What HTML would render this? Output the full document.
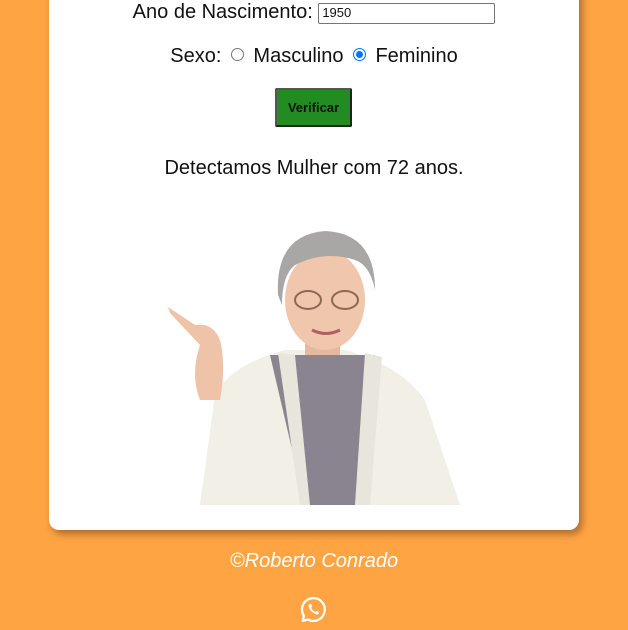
<!DOCTYPE html>
<html><head><meta charset="utf-8">
<style>
html,body{margin:0;padding:0;}
body{width:628px;height:630px;background:#FFA443;position:relative;overflow:hidden;font-family:"Liberation Sans",Arial,sans-serif;}
.card{position:absolute;left:49px;top:-20px;width:530px;height:550px;background:#fff;border-radius:10px;box-shadow:3px 4px 8px rgba(0,0,0,0.35);}
.t{position:absolute;left:0;width:628px;text-align:center;color:#111;font-size:20px;}
.inp{display:inline-block;border:1px solid #767676;border-radius:2px;vertical-align:middle;font-size:13px;text-align:left;line-height:18px;padding-left:3px;box-sizing:border-box;width:177px;height:21px;position:relative;top:1px}
.radio{display:inline-block;width:13px;height:13px;border:1px solid #767676;border-radius:50%;vertical-align:middle;margin:0 9px 0 10px;position:relative;top:-2px;box-sizing:border-box}
.radio.on{border-color:#0075ff;}
.radio.on:after{content:"";position:absolute;left:2px;top:2px;width:7px;height:7px;border-radius:50%;background:#0075ff;}
.btn{position:absolute;left:275px;top:88px;width:77px;height:39px;background:#228B22;border:2px solid #333;box-sizing:border-box;border-radius:2px;font-weight:bold;font-size:13px;text-align:center;line-height:35px;color:#111;border-color:#555 #222 #222 #555}
</style></head><body>
<div class="card"></div>
<div class="t" style="top:1px;">Ano de Nascimento: <span class="inp">1950</span></div>
<div class="t" style="top:45px;">Sexo:<span class="radio"></span>Masculino<span class="radio on"></span>Feminino</div>
<div class="btn">Verificar</div>
<div class="t" style="top:157px;">Detectamos Mulher com 72 anos.</div>
<svg style="position:absolute;left:160px;top:225px" width="310" height="282" viewBox="0 0 310 282">
  <path d="M40 280 L55 170 Q70 140 125 125 L185 125 Q240 140 265 175 L300 280 Z" fill="#f1efe6"/>
  <path d="M110 130 L145 280 L200 280 L215 130 Z" fill="#8a8490"/>
  <path d="M118 128 L140 280 L150 280 L135 130 Z" fill="#e8e6dc"/>
  <path d="M205 128 L195 280 L210 280 L222 132 Z" fill="#e8e6dc"/>
  <rect x="145" y="95" width="35" height="35" fill="#e6b8a0"/>
  <ellipse cx="165" cy="75" rx="40" ry="50" fill="#f0c6ad"/>
  <path d="M118 70 Q115 10 165 6 Q215 8 215 65 Q210 40 195 35 Q165 25 135 40 Q122 50 122 80 Z" fill="#a9a7a5"/>
  <ellipse cx="148" cy="75" rx="13" ry="9" fill="none" stroke="#8a6a50" stroke-width="2"/>
  <ellipse cx="185" cy="75" rx="13" ry="9" fill="none" stroke="#8a6a50" stroke-width="2"/>
  <path d="M152 105 Q166 112 180 105" stroke="#b06060" stroke-width="3" fill="none"/>
  <path d="M40 175 Q30 150 40 120 L10 88 L8 82 L35 100 L45 100 Q60 105 62 125 Q65 150 60 175 Z" fill="#efc3a8"/>
</svg>
<div class="t" style="top:550px;color:#fff;font-style:italic;">©Roberto Conrado</div>
<svg style="position:absolute;left:300px;top:596px" width="27" height="27" viewBox="0 0 26 26">
  <path d="M13 2 A11 11 0 1 1 7.5 22.6 L2.5 24 L3.8 19.2 A11 11 0 0 1 13 2 Z" fill="none" stroke="#fff" stroke-width="2.2" stroke-linejoin="round"/>
  <path d="M9.5 7.5 Q8 8.5 8.3 10.5 Q9.5 15 15 17.5 Q17 18.3 18.2 16.8 L18 15.3 L15.8 14.3 L14.8 15.3 Q12 14 10.8 11.3 L11.8 10.2 L10.9 7.9 Z" fill="#fff"/>
</svg>
</body></html>
